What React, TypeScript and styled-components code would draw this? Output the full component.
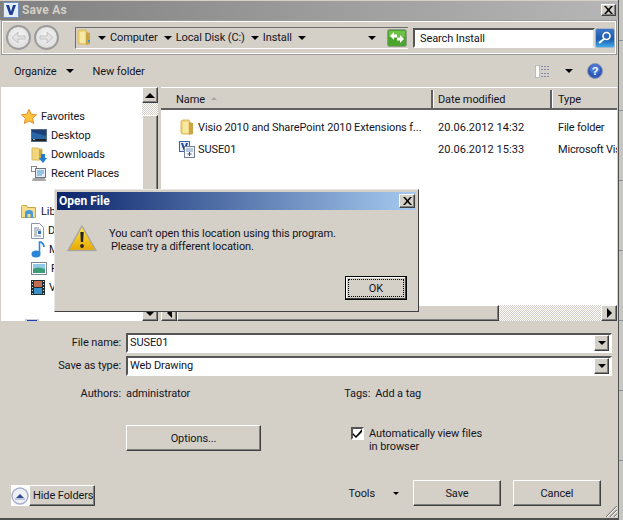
import { ReactNode } from 'react'
import styled, { createGlobalStyle, css } from 'styled-components'

const FACE = '#d4d0c8'
const FONT = 'Roboto, "Open Sans", sans-serif'

const GlobalStyle = createGlobalStyle`
  html, body {
    margin: 0;
    padding: 0;
    background: ${FACE};
  }
  * {
    box-sizing: border-box;
  }
  svg {
    flex: none;
  }
`

const raised = css`
  border: 1px solid;
  border-color: #fff #404040 #404040 #fff;
  box-shadow: inset -1px -1px 0 #808080;
  background: ${FACE};
`

const sunken = css`
  border: 2px solid;
  border-color: #555 #fff #fff #555;
  background: #fff;
`

const checker = css`
  background-color: #fff;
  background-image: conic-gradient(${FACE} 25%, #fff 0 50%, ${FACE} 0 75%, #fff 0);
  background-size: 2px 2px;
`

export default function App() {
  return (
    <Screen>
      <GlobalStyle />
      <Window>
        <TitleBar>
          <AppIcon />
          <TitleText>Save As</TitleText>
          <CloseButton>
            <CloseGlyph />
          </CloseButton>
        </TitleBar>

        <NavBar>
          <RoundButtons>
            <RoundButton>
              <ArrowGlyph flip />
            </RoundButton>
            <RoundButton>
              <ArrowGlyph />
            </RoundButton>
          </RoundButtons>
          <AddressBox>
            <FolderIcon />
            <Crumbs>
              <Caret $size={4} />
              <Crumb>Computer</Crumb>
              <Caret $size={4} />
              <Crumb>Local Disk (C:)</Crumb>
              <Caret $size={4} />
              <Crumb>Install</Crumb>
              <Caret $size={4} />
            </Crumbs>
            <AddressEnd>
              <Caret $size={4} />
              <RefreshIcon />
            </AddressEnd>
          </AddressBox>
          <SearchBox>Search Install</SearchBox>
          <SearchIcon />
        </NavBar>

        <CommandBar>
          <CommandLeft>
            <CommandItem>
              Organize
              <Caret $size={4} />
            </CommandItem>
            <CommandItem>New folder</CommandItem>
          </CommandLeft>
          <CommandRight>
            <ViewsIcon />
            <Caret $size={4} />
            <HelpIcon />
          </CommandRight>
        </CommandBar>

        <Browser>
          <NavPane>
            <NavGroup icon={<StarIcon />} label="Favorites">
              <NavItem icon={<DesktopIcon />} label="Desktop" />
              <NavItem icon={<DownloadsIcon />} label="Downloads" />
              <NavItem icon={<RecentIcon />} label="Recent Places" />
            </NavGroup>
            <NavGroup icon={<LibraryIcon />} label="Libraries">
              <NavItem icon={<DocIcon />} label="Documents" />
              <NavItem icon={<MusicIcon />} label="Music" />
              <NavItem icon={<PictureIcon />} label="Pictures" />
              <NavItem icon={<VideoIcon />} label="Videos" />
            </NavGroup>
            <ComputerRow>
              <ComputerIcon />
            </ComputerRow>
          </NavPane>
          <VScroll>
            <ScrollButton>
              <Caret $size={5} $up />
            </ScrollButton>
            <ScrollGap $size={12} />
            <ScrollThumb />
            <ScrollButton>
              <Caret $size={5} />
            </ScrollButton>
          </VScroll>

          <FilePane>
            <ColumnHeader>
              <NameHead>
                Name
                <SortMark />
              </NameHead>
              <DateHead>Date modified</DateHead>
              <TypeHead>Type</TypeHead>
            </ColumnHeader>
            <FileList>
              <FileRow
                icon={<FolderIcon small />}
                name="Visio 2010 and SharePoint 2010 Extensions f..."
                date="20.06.2012 14:32"
                type="File folder"
              />
              <FileRow
                icon={<VisioFileIcon />}
                name="SUSE01"
                date="20.06.2012 15:33"
                type="Microsoft Vis"
              />
            </FileList>
            <HScroll>
              <ScrollButton>
                <SideCaret $left />
              </ScrollButton>
              <HThumb />
              <ScrollGapH />
              <ScrollButton>
                <SideCaret />
              </ScrollButton>
            </HScroll>
          </FilePane>
        </Browser>

        <Footer>
          <FieldRow>
            <FieldLabel>File name:</FieldLabel>
            <ComboBox>
              SUSE01
              <ComboButton>
                <Caret $size={4} />
              </ComboButton>
            </ComboBox>
          </FieldRow>
          <FieldRow>
            <FieldLabel>Save as type:</FieldLabel>
            <ComboBox>
              Web Drawing
              <ComboButton>
                <Caret $size={4} />
              </ComboButton>
            </ComboBox>
          </FieldRow>
          <MetaRow>
            <FieldLabel>Authors:</FieldLabel>
            <MetaValue>administrator</MetaValue>
            <TagLabel>Tags:</TagLabel>
            <MetaValue>Add a tag</MetaValue>
          </MetaRow>
          <OptionsRow>
            <OptionsButton>Options...</OptionsButton>
            <CheckWrap>
              <CheckBox>
                <CheckGlyph />
              </CheckBox>
              <CheckText>
                Automatically view files
                <br />
                in browser
              </CheckText>
            </CheckWrap>
          </OptionsRow>
          <ActionRow>
            <HideFolders>
              <HideIconBox>
                <HideIcon />
              </HideIconBox>
              <HideLabel>Hide Folders</HideLabel>
            </HideFolders>
            <ActionGroup>
              <ToolsMenu>
                Tools
                <Caret $size={3} />
              </ToolsMenu>
              <ActionButton>Save</ActionButton>
              <ActionButton>Cancel</ActionButton>
            </ActionGroup>
          </ActionRow>
        </Footer>
        <GripIcon />
      </Window>
      <EdgeStrip />

      <Dialog>
        <DialogTitle>
          Open File
          <CloseButton $large>
            <CloseGlyph />
          </CloseButton>
        </DialogTitle>
        <DialogBody>
          <WarningIcon />
          <DialogText>
            You can&rsquo;t open this location using this program.
            <DialogSecond>Please try a different location.</DialogSecond>
          </DialogText>
        </DialogBody>
        <DialogActions>
          <OkButton>
            <OkFocus>OK</OkFocus>
          </OkButton>
        </DialogActions>
      </Dialog>
    </Screen>
  )
}

interface NavGroupProps {
  icon: ReactNode
  label: string
  children: ReactNode
}

function NavGroup({ icon, label, children }: NavGroupProps) {
  return (
    <GroupWrap>
      <GroupHead>
        {icon}
        {label}
      </GroupHead>
      {children}
    </GroupWrap>
  )
}

function NavItem({ icon, label }: { icon: ReactNode; label: string }) {
  return (
    <ItemRow>
      {icon}
      {label}
    </ItemRow>
  )
}

interface FileRowProps {
  icon: ReactNode
  name: string
  date: string
  type: string
}

function FileRow({ icon, name, date, type }: FileRowProps) {
  return (
    <FileRowWrap>
      <FileName>
        {icon}
        {name}
      </FileName>
      <FileDate>{date}</FileDate>
      <FileType>{type}</FileType>
    </FileRowWrap>
  )
}

/* icons */

function AppIcon() {
  return (
    <svg width="16" height="16" viewBox="0 0 16 16">
      <rect x="0.500" y="0.500" width="15" height="15" rx="1" fill="#e6eefa" stroke="#6f8fc8" />
      <path d="M3 3h3l2 6.500L10 3h3l-3.600 10H6.600z" fill="#1c3f94" />
    </svg>
  )
}

function CloseGlyph() {
  return (
    <svg width="9" height="8" viewBox="0 0 9 8">
      <path d="M0 0h2l2.500 2.800L7 0h2L5.500 4 9 8H7L4.500 5.200 2 8H0l3.500-4z" fill="#000" />
    </svg>
  )
}

function ArrowGlyph({ flip }: { flip?: boolean }) {
  return (
    <svg width="15" height="13" viewBox="0 0 15 13" style={flip ? { transform: 'scaleX(-1)' } : undefined}>
      <path d="M1 5h7V1l6 5.500-6 5.500V8H1z" fill="#e2e2e2" stroke="#c0c0c0" />
    </svg>
  )
}

function FolderIcon({ small }: { small?: boolean }) {
  return (
    <svg width="14" height="17" viewBox="0 0 14 17">
      <path d="M1 3q0-2 2-2h6l1 2v12H3q-2 0-2-2z" fill="#f0d77e" stroke="#d8b95a" />
      <path d="M9 3l4 1v11l-4 1z" fill="#c9a545" />
      <path d="M3 3h5v11H3z" fill="#f8e8a6" />
      {!small && <rect x="11" y="11" width="2" height="2" fill="#3a9ad0" />}
    </svg>
  )
}

function RefreshIcon() {
  return (
    <RefreshSvg width="20" height="18" viewBox="0 0 20 18">
      <rect x="0.500" y="0.500" width="19" height="17" rx="2" fill="#4ba52d" stroke="#8f9c8a" />
      <rect x="2" y="2" width="16" height="6" fill="#6cc247" />
      <path d="M3 7l4-4v2.500h3v3H7V11zM17 10l-4 4v-2.500h-3v-3h3V6z" fill="#fff" />
    </RefreshSvg>
  )
}

function SearchIcon() {
  return (
    <svg width="20" height="20" viewBox="0 0 20 20">
      <defs>
        <linearGradient id="searchBg" x1="0" y1="0" x2="0" y2="1">
          <stop offset="0" stopColor="#3f78c8" />
          <stop offset="0.55" stopColor="#1c58ac" />
          <stop offset="1" stopColor="#3fb0ee" />
        </linearGradient>
      </defs>
      <rect x="0.500" y="0.500" width="19" height="19" rx="2" fill="url(#searchBg)" stroke="#a8b4c8" />
      <circle cx="11.500" cy="8" r="3.500" fill="#2c66b5" stroke="#fff" strokeWidth="1.600" />
      <path d="M9 11l-5 4" stroke="#fff" strokeWidth="2.200" />
    </svg>
  )
}

function ViewsIcon() {
  return (
    <svg width="16" height="13" viewBox="0 0 16 13">
      <path d="M0.500 0.500h4v12h-4z" fill="#fff" stroke="#7f95c0" strokeDasharray="1 1" />
      <path d="M6 1.500h9M6 4.500h9M6 8.500h9M6 11.500h9" stroke="#7f8fb0" strokeDasharray="2 1" />
    </svg>
  )
}

function HelpIcon() {
  return (
    <svg width="16" height="16" viewBox="0 0 16 16">
      <circle cx="8" cy="8" r="7.500" fill="#2f58b8" stroke="#8e99ae" />
      <circle cx="8" cy="6" r="5" fill="#4c77d4" />
      <text x="8" y="12" textAnchor="middle" fontSize="11" fontWeight="700" fontFamily="Liberation Sans" fill="#fff">
        ?
      </text>
    </svg>
  )
}

function StarIcon() {
  return (
    <svg width="16" height="15" viewBox="0 0 16 15">
      <path
        d="M8 .5l2.200 4.700 5.300.6-3.900 3.500 1 5.200L8 11.900l-4.600 2.600 1-5.200L.500 5.800l5.300-.6z"
        fill="#ffc63d"
        stroke="#e08a2a"
      />
    </svg>
  )
}

function DesktopIcon() {
  return (
    <svg width="16" height="13" viewBox="0 0 16 13">
      <rect x="0.500" y="0.500" width="15" height="12" fill="#2866a8" stroke="#5a6a80" />
      <path d="M1 1h14v6L1 3z" fill="#1d3f78" />
      <rect x="1" y="10" width="14" height="2" fill="#222" />
      <rect x="2" y="10" width="2" height="1" fill="#6ec0f0" />
    </svg>
  )
}

function DownloadsIcon() {
  return (
    <svg width="16" height="17" viewBox="0 0 16 17">
      <path d="M1 2h6l1 1h3v11H1z" fill="#f0d77e" stroke="#d8b95a" />
      <path d="M8 3l3 1v10H8z" fill="#c9a545" />
      <path d="M10 8h4v4h2l-4 5-4-5h2z" fill="#1f7fd8" />
    </svg>
  )
}

function RecentIcon() {
  return (
    <svg width="16" height="17" viewBox="0 0 16 17">
      <rect x="0.500" y="1.500" width="5" height="5" fill="#fff" stroke="#8a8a8a" />
      <rect x="4.500" y="3.500" width="10" height="9" fill="#e8eef5" stroke="#6c7480" />
      <path d="M6 6h7M6 8h7M6 10h5" stroke="#3c9ad0" />
      <path d="M2 13h12l1 3H1z" fill="#a8a8a8" />
    </svg>
  )
}

function LibraryIcon() {
  return (
    <svg width="16" height="15" viewBox="0 0 16 15">
      <path d="M.500 2.500q0-1 1-1h4l1 2h8v10h-14z" fill="#f6dd8a" stroke="#c9a545" />
      <path d="M4 14V9q0-3 4-3t4 3v5h-2.500V10h-3v4z" fill="#4d9ad8" />
    </svg>
  )
}

function DocIcon() {
  return (
    <svg width="13" height="16" viewBox="0 0 13 16">
      <path d="M.500.500h8l4 4v11H.500z" fill="#fff" stroke="#8a96a8" />
      <path d="M3 5h5M3 7h7M3 9h3M3 11h3M3 13h7" stroke="#7a8aa0" />
      <rect x="7" y="8" width="3" height="3" fill="#3474b8" />
    </svg>
  )
}

function MusicIcon() {
  return (
    <svg width="14" height="17" viewBox="0 0 14 17">
      <ellipse cx="5" cy="13" rx="4.500" ry="3.500" fill="#2c86d8" />
      <path d="M8.500 13V1h1.500q3 2 3 5" fill="none" stroke="#2c86d8" strokeWidth="1.600" />
    </svg>
  )
}

function PictureIcon() {
  return (
    <svg width="16" height="13" viewBox="0 0 16 13">
      <rect x="0.500" y="0.500" width="15" height="12" fill="#fff" stroke="#7f8790" />
      <rect x="2" y="2" width="12" height="5" fill="#8fcbe8" />
      <path d="M2 7q4-3 12 0v4H2z" fill="#3d9c78" />
    </svg>
  )
}

function VideoIcon() {
  return (
    <svg width="14" height="15" viewBox="0 0 14 15">
      <rect width="14" height="15" fill="#1e2e30" />
      <path d="M1 1.500h1M1 4.500h1M1 7.500h1M1 10.500h1M1 13.500h1M12 1.500h1M12 4.500h1M12 7.500h1M12 10.500h1M12 13.500h1" stroke="#d8e4e4" />
      <rect x="3" y="1" width="8" height="6" fill="#c06c50" />
      <rect x="3" y="8" width="8" height="6" fill="#3c90c8" />
    </svg>
  )
}

function ComputerIcon() {
  return (
    <svg width="14" height="9" viewBox="0 0 14 9">
      <rect width="14" height="9" fill="#c8cdd8" />
      <rect x="2" y="1" width="10" height="5" fill="#1d3fb8" />
    </svg>
  )
}

function VisioFileIcon() {
  return (
    <VisioSvg width="16" height="17" viewBox="0 0 16 17">
      <rect x="0.500" y="0.500" width="10" height="10" fill="#e4ecf8" stroke="#3a62a8" />
      <path d="M2 2h2l1.500 5L7 2h2l-2.500 7h-2z" fill="#1c3f94" />
      <rect x="5.500" y="5.500" width="10" height="11" fill="#f4f6fa" stroke="#6f7f98" />
      <path d="M7 8h7M7 10h7" stroke="#7a96c8" />
      <path d="M10.500 11v4M8.500 13h4" stroke="#38507c" />
    </VisioSvg>
  )
}

function CheckGlyph() {
  return (
    <svg width="9" height="9" viewBox="0 0 9 9">
      <path d="M0 4l3 3 6-7v3L3 9 0 6z" fill="#000" />
    </svg>
  )
}

function HideIcon() {
  return (
    <svg width="18" height="18" viewBox="0 0 18 18">
      <circle cx="9" cy="9" r="8" fill="#eef0f6" stroke="#a8b0cc" strokeWidth="1.500" />
      <path d="M5 11l4-4 4 4z" fill="#2d4a8c" />
      <path d="M4 12h10" stroke="#8b9bc4" />
    </svg>
  )
}

function WarningIcon() {
  return (
    <svg width="30" height="27" viewBox="0 0 30 27">
      <defs>
        <linearGradient id="warnBg" x1="0" y1="0" x2="0" y2="1">
          <stop offset="0" stopColor="#ffe24a" />
          <stop offset="1" stopColor="#e8a800" />
        </linearGradient>
      </defs>
      <path d="M15 1l14 24.500H1z" fill="url(#warnBg)" stroke="#a8a8a0" strokeWidth="1.500" strokeLinejoin="round" />
      <path d="M13.300 7h3.400l-.6 10h-2.200z" fill="#222" />
      <circle cx="15" cy="21" r="1.900" fill="#222" />
    </svg>
  )
}

function GripIcon() {
  return (
    <GripSvg width="11" height="11" viewBox="0 0 11 11">
      <path d="M0 11L11 0M4 11l7-7M8 11l3-3" stroke="#808080" strokeWidth="1.200" />
      <path d="M1 11L11 1M5 11l6-6M9 11l2-2" stroke="#fff" strokeWidth="0.800" />
    </GripSvg>
  )
}

/* layout */

const Screen = styled.div`
  position: relative;
  display: flex;
  width: 623px;
  height: 520px;
  overflow: hidden;
  font-family: ${FONT};
  font-size: 11px;
  letter-spacing: -0.1px;
  color: #14141e;
  background: ${FACE};
`

const Window = styled.div`
  position: relative;
  display: flex;
  flex-direction: column;
  width: 619px;
  height: 520px;
  border-right: 1px solid #505050;
  border-bottom: 2px solid #505050;
`

const EdgeStrip = styled.div`
  flex: 1;
  background: repeating-linear-gradient(180deg, #c6c6c2 0 40px, #8a8f98 40px 41px, #c6c6c2 41px 70px);
`

const TitleBar = styled.div`
  display: flex;
  align-items: center;
  flex: 0 0 20px;
  gap: 3px;
  padding: 0 2px 1px 3px;
  border-top: 1px solid ${FACE};
  background: linear-gradient(90deg, #808080, #b6b6b6);
`

const TitleText = styled.span`
  flex: 1;
  font-size: 12px;
  font-weight: 700;
  color: ${FACE};
  letter-spacing: 0.2px;
`

const CloseButton = styled.div<{ $large?: boolean }>`
  ${raised}
  display: flex;
  align-items: center;
  justify-content: center;
  width: ${(p) => (p.$large ? 16 : 15)}px;
  height: ${(p) => (p.$large ? 14 : 12)}px;
`

const NavBar = styled.div`
  display: flex;
  align-items: center;
  flex: 0 0 35px;
  padding: 0 1px 0 4px;
  margin: 0 1px;
  border: 1px solid #9a9a9a;
  box-shadow: inset 1px 1px 0 #fff, inset -1px -1px 0 #fff;
`

const RoundButtons = styled.div`
  display: flex;
  gap: 3px;
  margin-right: 16px;
`

const RoundButton = styled.div`
  display: flex;
  align-items: center;
  justify-content: center;
  width: 25px;
  height: 25px;
  border-radius: 50%;
  border: 2px solid #9c9c9c;
  background: radial-gradient(circle at 50% 40%, #f6f6f6, #d6d6d6);
`

const AddressBox = styled.div`
  display: flex;
  align-items: center;
  flex: none;
  width: 333px;
  height: 22px;
  padding: 0 0 0 1px;
  border-left: 1px solid #6e6e6e;
  border-top: 1px solid #6e6e6e;
  border-bottom: 1px solid #fff;
  background: ${FACE};
`

const Crumbs = styled.div`
  display: flex;
  align-items: center;
  gap: 4px;
  margin-left: 7px;
`

const Crumb = styled.span`
  margin-right: 2px;
`

const AddressEnd = styled.div`
  display: flex;
  align-items: center;
  gap: 11px;
  margin-left: auto;
`

const RefreshSvg = styled.svg`
  margin-right: 1px;
`

const SearchBox = styled.div`
  display: flex;
  align-items: center;
  flex: none;
  width: 182px;
  height: 20px;
  margin-left: 5px;
  padding: 1px 0 0 5px;
  border: 2px solid;
  border-color: #555 #dcdcdc #fff #555;
  background: #fff;
`

const Caret = styled.span<{ $size: number; $up?: boolean }>`
  display: inline-block;
  width: 0;
  height: 0;
  border-left: ${(p) => p.$size}px solid transparent;
  border-right: ${(p) => p.$size}px solid transparent;
  ${(p) => (p.$up ? 'border-bottom' : 'border-top')}: ${(p) => p.$size}px solid #000;
`

const SideCaret = styled.span<{ $left?: boolean }>`
  display: inline-block;
  width: 0;
  height: 0;
  border-top: 5px solid transparent;
  border-bottom: 5px solid transparent;
  ${(p) => (p.$left ? 'border-right: 5px solid #000;' : 'border-left: 5px solid #000;')}
`

const CommandBar = styled.div`
  display: flex;
  align-items: center;
  justify-content: space-between;
  flex: 0 0 32px;
  padding: 0 15px 0 14px;
`

const CommandLeft = styled.div`
  display: flex;
  align-items: center;
  gap: 19px;
`

const CommandItem = styled.div`
  display: flex;
  align-items: center;
  gap: 9px;
`

const CommandRight = styled.div`
  display: flex;
  align-items: center;
  gap: 14px;
`

const Browser = styled.div`
  display: flex;
  flex: 0 0 234px;
  min-height: 0;
  overflow: hidden;
  padding-left: 1px;
`

const NavPane = styled.div`
  width: 141px;
  padding: 20px 0 0 20px;
  overflow: hidden;
  background: #fff;
`

const GroupWrap = styled.div`
  margin-bottom: 19px;
`

const GroupHead = styled.div`
  display: flex;
  align-items: center;
  gap: 4px;
  height: 19px;
`

const ItemRow = styled.div`
  display: flex;
  align-items: center;
  gap: 4px;
  height: 19px;
  padding-left: 10px;
`

const ComputerRow = styled.div`
  padding: 2px 0 0 4px;
`

const VScroll = styled.div`
  display: flex;
  flex-direction: column;
  flex: 0 0 16px;
  ${checker}
`

const ScrollButton = styled.div`
  ${raised}
  display: flex;
  align-items: center;
  justify-content: center;
  flex: 0 0 16px;
  height: 16px;
`

const ScrollGap = styled.div<{ $size: number }>`
  flex: 0 0 ${(p) => p.$size}px;
`

const ScrollThumb = styled.div`
  ${raised}
  flex: 1;
`

const FilePane = styled.div`
  display: flex;
  flex-direction: column;
  width: 456px;
  margin-left: 3px;
  background: #fff;
`

const ColumnHeader = styled.div`
  display: flex;
  flex: 0 0 23px;
  padding-top: 2px;
  background: ${FACE};
  border-top: 1px solid #fff;
  border-bottom: 2px solid #606060;
`

const NameHead = styled.div`
  display: flex;
  align-items: center;
  gap: 6px;
  width: 272px;
  padding-left: 15px;
  border-right: 2px solid #606060;
`

const DateHead = styled.div`
  display: flex;
  align-items: center;
  width: 119px;
  padding-left: 4px;
  border-left: 1px solid #fff;
  border-right: 2px solid #606060;
`

const TypeHead = styled.div`
  display: flex;
  align-items: center;
  flex: 1;
  padding-left: 5px;
  border-left: 1px solid #fff;
`

const SortMark = styled.span`
  width: 0;
  height: 0;
  margin-bottom: 2px;
  border-left: 3px solid transparent;
  border-right: 3px solid transparent;
  border-bottom: 3px solid #a8a8a8;
`

const FileList = styled.div`
  flex: 1;
  padding-top: 6px;
  overflow: hidden;
`

const FileRowWrap = styled.div`
  display: flex;
  align-items: center;
  height: 22px;
  white-space: nowrap;
`

const FileName = styled.div`
  display: flex;
  align-items: center;
  gap: 4px;
  width: 277px;
  padding-left: 19px;
`

const VisioSvg = styled.svg`
  margin: 0 -1px;
`

const FileDate = styled.div`
  width: 120px;
  letter-spacing: 0.05px;
`

const FileType = styled.div`
  flex: 1;
  overflow: hidden;
  letter-spacing: -0.2px;
`

const HScroll = styled.div`
  display: flex;
  flex: 0 0 16px;
  ${checker}
`

const HThumb = styled.div`
  ${raised}
  width: 322px;
`

const ScrollGapH = styled.div`
  flex: 1;
`

const Footer = styled.div`
  display: flex;
  flex-direction: column;
  flex: 1;
  padding: 10px 0 0;
`

const FieldRow = styled.div`
  display: flex;
  align-items: center;
  flex: none;
  height: 23px;
`

const FieldLabel = styled.div`
  width: 122px;
  padding-right: 1px;
  text-align: right;
`

const ComboBox = styled.div`
  ${sunken}
  display: flex;
  align-items: center;
  justify-content: space-between;
  width: 486px;
  height: 20px;
  margin-left: 4px;
  padding-left: 2px;
`

const ComboButton = styled.div`
  ${raised}
  display: flex;
  align-items: center;
  justify-content: center;
  width: 15px;
  height: 16px;
  margin-right: 1px;
`

const MetaRow = styled.div`
  display: flex;
  align-items: center;
  flex: none;
  height: 18px;
  margin-top: 7px;
`

const MetaValue = styled.span`
  margin-left: 4px;
`

const TagLabel = styled.span`
  margin: 0 1px 0 154px;
`

const OptionsRow = styled.div`
  display: flex;
  align-items: flex-start;
  flex: none;
  margin-top: 23px;
  padding-left: 126px;
`

const OptionsButton = styled.div`
  ${raised}
  display: flex;
  align-items: center;
  justify-content: center;
  width: 135px;
  height: 26px;
`

const CheckWrap = styled.div`
  display: flex;
  align-items: flex-start;
  gap: 5px;
  margin: 2px 0 0 90px;
`

const CheckBox = styled.div`
  ${sunken}
  display: flex;
  align-items: center;
  justify-content: center;
  flex: 0 0 13px;
  height: 13px;
`

const CheckText = styled.div`
  line-height: 13px;
`

const ActionRow = styled.div`
  display: flex;
  align-items: flex-start;
  justify-content: space-between;
  flex: none;
  margin-top: 27px;
  padding: 0 17px 0 11px;
`

const HideFolders = styled.div`
  display: flex;
  align-items: stretch;
  margin-top: 5px;
`

const HideIconBox = styled.div`
  display: flex;
  align-items: center;
  background: #fff;
`

const HideLabel = styled.div`
  ${raised}
  display: flex;
  align-items: center;
  width: 66px;
  height: 21px;
  padding-left: 3px;
  white-space: nowrap;
`

const ActionGroup = styled.div`
  display: flex;
  align-items: center;
  gap: 12px;
`

const ToolsMenu = styled.div`
  display: flex;
  align-items: center;
  gap: 18px;
  margin-right: 2px;
`

const ActionButton = styled.div`
  ${raised}
  display: flex;
  align-items: center;
  justify-content: center;
  width: 88px;
  height: 26px;
`

const GripSvg = styled.svg`
  position: absolute;
  right: 1px;
  bottom: 1px;
`

const Dialog = styled.div`
  position: absolute;
  left: 54px;
  top: 189px;
  display: flex;
  flex-direction: column;
  width: 365px;
  height: 123px;
  padding: 2px;
  border: 1px solid;
  border-color: #e8e8e4 #404040 #404040 #e8e8e4;
  background: ${FACE};
`

const DialogTitle = styled.div`
  display: flex;
  align-items: center;
  justify-content: space-between;
  flex: 0 0 18px;
  padding: 0 1px 0 2px;
  font-size: 12px;
  font-weight: 700;
  letter-spacing: 0;
  color: #fff;
  background: linear-gradient(90deg, #0a246a, #a6caf0);
`

const DialogBody = styled.div`
  display: flex;
  align-items: flex-start;
  flex: 1;
  padding: 15px 0 0 10px;
`

const DialogText = styled.div`
  margin-left: 12px;
  padding-top: 2px;
  line-height: 13px;
`

const DialogSecond = styled.div`
  padding-left: 2px;
`

const DialogActions = styled.div`
  display: flex;
  justify-content: flex-end;
  padding: 0 9px 9px 0;
`

const OkButton = styled.div`
  display: flex;
  align-items: center;
  justify-content: center;
  width: 62px;
  height: 24px;
  padding: 2px;
  background: ${FACE};
  border: 1px solid #000;
  box-shadow: inset -1px -1px 0 #404040, inset 1px 1px 0 #fff;
`

const OkFocus = styled.div`
  display: flex;
  align-items: center;
  justify-content: center;
  width: 100%;
  height: 100%;
  border: 1px dotted #000;
`
